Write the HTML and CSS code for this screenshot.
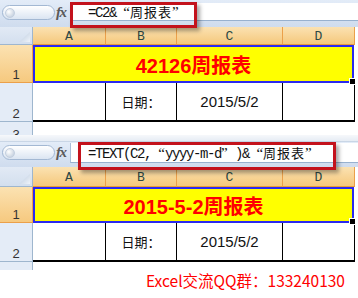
FILE: index.html
```html
<!DOCTYPE html>
<html lang="zh-CN">
<head>
    <meta charset="UTF-8">
    <title>TEXT 函数 周报表</title>
    <link rel="stylesheet" href="styles.css">
</head>
<body>

    <!-- 第一张截图：=C2&"周报表" -->
    <div class="sheet one">
        <div class="fbar">
            <div class="namebox"><span class="knob"></span></div>
            <div class="fx">fx</div>
            <div class="input"><span class="formula">=C2&amp;<span class="q open">“</span><span class="zh">周报表</span><span class="q close">”</span></span></div>
            <div class="mark"></div>
        </div>
        <div class="grid">
            <div class="corner"><span class="tri"></span></div>
            <div class="colhd">A</div>
            <div class="colhd">B</div>
            <div class="colhd">C</div>
            <div class="colhd">D</div>
            <div class="edge"></div>

            <div class="rowhd sel">1</div>
            <div class="title">42126周报表</div>
            <div class="edge"></div>

            <div class="rowhd">2</div>
            <div class="cell"></div>
            <div class="cell label">日期：</div>
            <div class="cell num">2015/5/2</div>
            <div class="cell"></div>
            <div class="edge"></div>

            <div class="rowhd cut">3</div>
        </div>
    </div>

    <!-- 第二张截图：TEXT 函数 -->
    <div class="sheet two">
        <div class="strip"></div>
        <div class="fbar">
            <div class="namebox"><span class="knob"></span></div>
            <div class="fx">fx</div>
            <div class="input"><span class="formula">=TEXT(C2,<span class="q open">“</span>yyyy-m-d<span class="q close">”</span>)&amp;<span class="q open">“</span><span class="zh">周报表</span><span class="q close">”</span></span></div>
            <div class="mark"></div>
        </div>
        <div class="grid">
            <div class="corner"><span class="tri"></span></div>
            <div class="colhd">A</div>
            <div class="colhd">B</div>
            <div class="colhd">C</div>
            <div class="colhd">D</div>
            <div class="edge"></div>

            <div class="rowhd sel">1</div>
            <div class="title">2015-5-2周报表</div>
            <div class="edge"></div>

            <div class="rowhd">2</div>
            <div class="cell"></div>
            <div class="cell label">日期：</div>
            <div class="cell num">2015/5/2</div>
            <div class="cell"></div>
            <div class="edge"></div>

            <div class="rowhd cut">3</div>
        </div>
    </div>

    <p class="foot">Excel交流QQ群：133240130</p>

</body>
</html>
```

FILE: styles.css
```css
* {
    box-sizing: border-box;
}

body {
    margin: 0;
    width: 358px;
    height: 298px;
    overflow: hidden;
    background-color: #fff;
    font-family: "Liberation Sans", "Noto Sans CJK SC", sans-serif;
}

/* 编辑栏 */
.fbar {
    position: relative;
    display: flex;
    align-items: flex-start;
    background: linear-gradient(#e3ecf8, #cfdcee);
}

.one .fbar {
    height: 27px;
    padding-top: 3px;
}

.two .fbar {
    height: 25px;
    padding-top: 1px;
}

.strip {
    height: 7px;
    background: linear-gradient(#f6f8fb, #e6ecf4);
    border-bottom: 1px solid #c9d6e6;
}

.namebox {
    width: 53px;
    height: 15px;
    margin: 2px 0 0 2px;
    border: 1px solid #a3b8d3;
    border-radius: 8px;
    background: linear-gradient(#ffffff, #dbe5f2);
    display: flex;
    align-items: center;
    padding-left: 2px;
}

.knob {
    width: 10px;
    height: 10px;
    border-radius: 50%;
    background: radial-gradient(circle at 35% 35%, #ffffff, #b8c6d8);
    border: 1px solid #c3cfdf;
}

.fx {
    width: 15px;
    padding: 1px 0 0 1px;
    font-family: "Liberation Serif", serif;
    font-style: italic;
    font-weight: bold;
    font-size: 15px;
    line-height: 17px;
    color: #5a5a5a;
    letter-spacing: -1.5px;
}

.input {
    flex: 1;
    height: 18px;
    background-color: #fff;
    border-left: 1px solid #a9bdd8;
    border-bottom: 1px solid #98b1cf;
    padding-left: 17px;
    line-height: 18px;
    white-space: nowrap;
}

.two .input {
    height: 20px;
    line-height: 20px;
}

.formula {
    font-family: "Liberation Mono", monospace;
    font-size: 14px;
    letter-spacing: -1.4px;
    color: #111;
}

.formula .zh {
    font-family: "Noto Sans CJK SC", sans-serif;
    font-size: 13px;
    letter-spacing: 1px;
}

/* 全角引号 */
.q {
    display: inline-block;
    width: 14px;
    letter-spacing: 0;
    font-family: "Liberation Serif", serif;
    font-size: 15px;
}

.q.open {
    text-align: right;
}

.q.close {
    text-align: left;
}

/* 红色标注框 */
.mark {
    position: absolute;
    z-index: 2;
    border: 3px solid #c3121c;
    box-shadow: 3px 3px 4px rgba(0, 0, 0, 0.35);
}

.one .mark {
    left: 70px;
    top: 2px;
    width: 127px;
    height: 26px;
}

.two .mark {
    left: 78px;
    top: 0;
    width: 258px;
    height: 28px;
}

/* 表格 */
.grid {
    display: grid;
    grid-template-columns: 33px 73px 71px 106px 72px 1fr;
}

.one .grid {
    grid-template-rows: 18px 38px 39px 13px;
}

.two .grid {
    grid-template-rows: 20px 36px 39px 8px;
}

.corner {
    background: linear-gradient(#e2eaf5, #d3dfee);
    border-right: 1px solid #9eb6ce;
    border-bottom: 1px solid #9eb6ce;
    display: flex;
    justify-content: flex-end;
    align-items: flex-end;
    padding: 0 2px 2px 0;
}

.tri {
    width: 11px;
    height: 10px;
    background: linear-gradient(135deg, #b6c7dc, #eef3f9);
    clip-path: polygon(100% 0, 100% 100%, 0 100%);
}

.colhd {
    background: linear-gradient(#fbe2b2, #f5c87c);
    border-right: 1px solid #eba04a;
    border-bottom: 1px solid #e99b3c;
    display: flex;
    justify-content: center;
    align-items: center;
    font-family: "Liberation Mono", monospace;
    font-size: 13px;
    color: #2c4845;
    padding-top: 2px;
}

.edge {
    background-color: #fff;
}

.rowhd {
    background-color: #e4ecf7;
    border-right: 1px solid #9eb6ce;
    border-bottom: 1px solid #9eb6ce;
    display: flex;
    justify-content: center;
    align-items: flex-end;
    font-size: 13px;
    color: #333;
    line-height: 15px;
}

.rowhd.sel {
    background: linear-gradient(#fbe2b2, #f6c97f);
    border-color: #eba04a;
}

.rowhd.cut {
    align-items: flex-start;
    padding-top: 5px;
    border-bottom: none;
    overflow: hidden;
}

.title {
    grid-column: span 4;
    position: relative;
    background-color: #ffff00;
    border: 2px solid #2a2af0;
    margin-right: 1px;
    display: flex;
    justify-content: center;
    align-items: center;
    color: #ff0000;
    font-weight: bold;
    font-size: 20px;
    font-family: "Liberation Sans", "Noto Sans CJK SC", sans-serif;
}

/* 填充柄 */
.title::after {
    content: "";
    position: absolute;
    right: -4px;
    bottom: -4px;
    width: 5px;
    height: 5px;
    background-color: #000;
    border: 1px solid #fff;
}

.cell {
    border-right: 1px solid #000;
    border-bottom: 2px solid #000;
    display: flex;
    justify-content: center;
    align-items: center;
    color: #111;
}

.label {
    font-family: "Noto Sans CJK SC", sans-serif;
    font-size: 13px;
}

.num {
    font-size: 15px;
}

.foot {
    margin: 0;
    padding-left: 146px;
    line-height: 20px;
    font-family: "Noto Sans CJK SC", sans-serif;
    font-size: 15.5px;
    color: #ff0000;
}
```
